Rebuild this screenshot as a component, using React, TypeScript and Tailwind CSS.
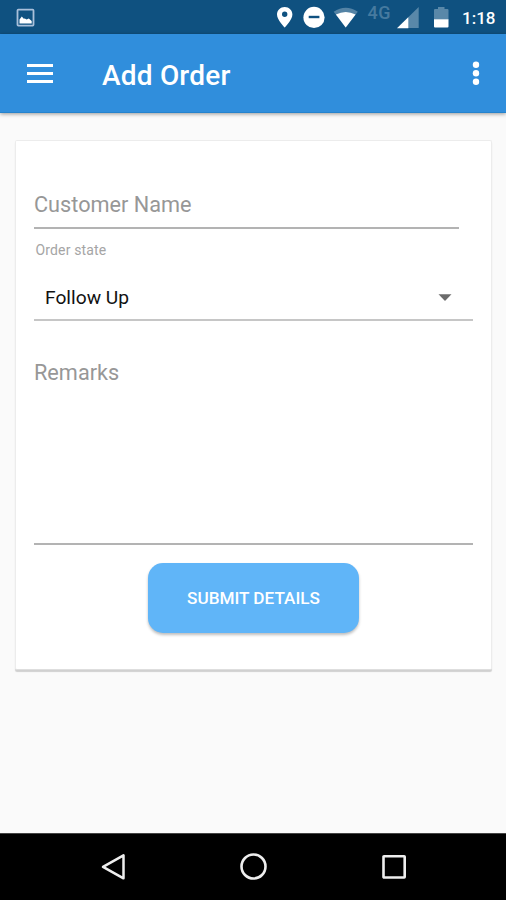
import React from "react";

function StatusBar() {
  return (
    <div className="flex h-[34px] shrink-0 items-start bg-[#0f5180]">
      <svg className="ml-4 mt-2 h-[19px] w-[19px]" viewBox="0 0 19 19">
        <rect x="1.5" y="1.6" width="16" height="16" rx="0.8" fill="none" stroke="#a9c0da" strokeWidth="1.8" />
        <path d="M3.5 15.500v-4l2.300-3 2 2.200 1-.3 1.800 1.200 2.200-1.200 2.900 2.500v2.600z" fill="#fff" />
      </svg>
      <svg className="ml-[242px] h-[34px] w-[173px]" viewBox="277 0 173 34">
        <path fillRule="evenodd" d="M284.7 7c-4.3 0-7.7 3.3-7.7 7.5 0 5.5 7.7 13 7.7 13s7.7-7.500 7.700-13c0-4.200-3.400-7.500-7.700-7.500zm0 4.600a2.700 2.700 0 1 1 0 5.400a2.700 2.700 0 0 1 0-5.400z" fill="#fff" />
        <circle cx="314" cy="17.400" r="10.600" fill="#fff" />
        <rect x="308.700" y="15.800" width="10.700" height="2.400" fill="#0f5180" />
        <path d="M333.700 11.700Q345.700 3.700 357.800 11.700L345.700 27.500z" fill="#5483a5" />
        <path d="M335.900 14.600Q345.700 9.500 355.600 14.600L345.700 27.500z" fill="#fff" />
        <text x="367.500" y="19.300" fontFamily="Roboto, sans-serif" fontSize="18" fontWeight="500" letterSpacing="0.500" fill="#467a9f">4G</text>
        <path d="M418.700 7v21H397.300z" fill="#5988a9" />
        <path d="M408.300 17.200V28.200H397z" fill="#fff" />
        <path d="M434 19.500V10q0-1 1-1h3V7h6.500v2h3q1 0 1 1v9.500z" fill="#5988a9" />
        <path d="M434 19.300h14.500v7.200q0 1-1 1h-12.500q-1 0-1-1z" fill="#fff" />
      </svg>
      <span className="ml-[12px] mt-[6px] text-[17px] font-medium leading-6 text-white">1:18</span>
    </div>
  );
}

function AppBar() {
  return (
    <header className="z-10 flex h-[79px] shrink-0 items-center border-b border-[#2583cd] bg-[#308edc] shadow-[0_1px_4px_rgba(0,0,0,0.4)]">
      <button aria-label="Menu" className="ml-[27px] flex w-[26px] flex-col gap-[5px]">
        <span className="h-[3px] bg-white" />
        <span className="h-[3px] bg-white" />
        <span className="h-[3px] bg-white" />
      </button>
      <h1 className="ml-[49px] mt-[6px] text-[28px] font-medium leading-8 tracking-[0.2px] text-white">Add Order</h1>
      <svg aria-label="More options" className="ml-auto mr-[26px] h-[26px] w-[8px]" viewBox="0 0 8 26" fill="#fff">
        <circle cx="4" cy="4.700" r="3.200" />
        <circle cx="4" cy="13.200" r="3.200" />
        <circle cx="4" cy="21.700" r="3.200" />
      </svg>
    </header>
  );
}

function OrderForm() {
  return (
    <main className="flex-1 bg-[#fafafa] pl-[15px] pr-[14px] pt-[27px]">
      <section className="flex h-[530px] flex-col rounded-[2px] border border-[#ececec] border-b-[#dedede] bg-white px-[18px] shadow-[0_2px_1px_rgba(0,0,0,0.17)]">
        <div className="mr-[14px] mt-[50px] h-[38px] border-b-2 border-[#b3b3b3] text-[21.700px] leading-7 text-[#979797]">
          Customer Name
        </div>
        <div className="ml-[1.500px] mt-[13px] text-[14px] leading-4 tracking-[0.150px] text-[#a5a5a5]">Order state</div>
        <div className="mt-[20px] flex h-[43px] justify-between border-b-2 border-[#c6c6c6] pl-[11px] pr-[21px]">
          <span className="mt-[8px] text-[19.200px] leading-6 text-[#111]">Follow Up</span>
          <svg className="mt-[15px] h-[8px] w-[14px]" viewBox="0 0 14 8">
            <path d="M0.500 1.200h13L7 7.900z" fill="#6c6c6c" />
          </svg>
        </div>
        <div className="mt-[38px] h-[186px] border-b-2 border-[#b3b3b3] text-[21.700px] leading-7 text-[#979797]">Remarks</div>
        <button className="mt-[18px] h-[70px] w-[211px] self-center rounded-[15px] bg-[#60b5f8] pt-[2px] text-[17.150px] font-medium text-white shadow-[0_2px_3px_rgba(0,0,0,0.26)]">
          SUBMIT DETAILS
        </button>
      </section>
    </main>
  );
}

function NavigationBar() {
  return (
    <nav className="flex h-[67px] shrink-0 items-center justify-between border-t border-[#444] bg-black pl-[99px] pr-[97px]">
      <svg className="size-[30px]" viewBox="0 0 30 30" fill="none" stroke="#eee" strokeWidth="2.500">
        <path d="M24.500 3.300v23L4 14.800z" strokeLinejoin="round" />
      </svg>
      <svg className="size-[30px]" viewBox="0 0 30 30" fill="none" stroke="#eee" strokeWidth="2.600">
        <circle cx="14.500" cy="14.500" r="12" />
      </svg>
      <svg className="size-[30px]" viewBox="0 0 30 30" fill="none" stroke="#eee" strokeWidth="2.600">
        <rect x="4.500" y="4.300" width="21.200" height="21.200" rx="0.500" />
      </svg>
    </nav>
  );
}

export default function App() {
  return (
    <div className="flex h-screen w-full flex-col overflow-hidden bg-[#fafafa] font-['Roboto',sans-serif]">
      <StatusBar />
      <AppBar />
      <OrderForm />
      <NavigationBar />
    </div>
  );
}
